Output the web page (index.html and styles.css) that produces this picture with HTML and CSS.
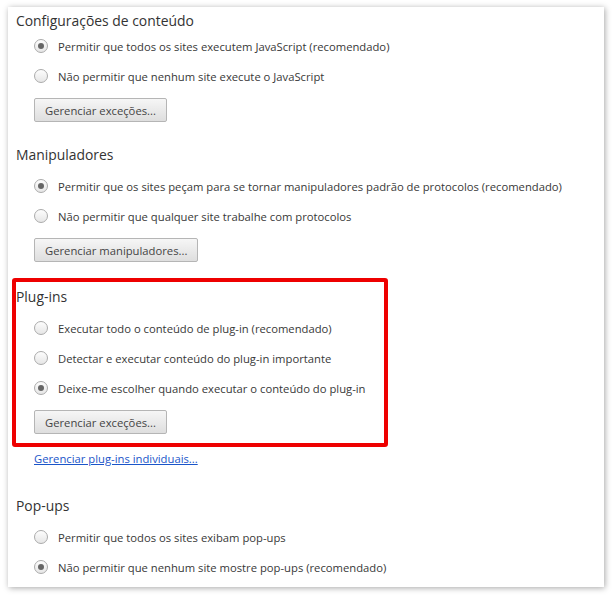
FILE: index.html
```html
<!DOCTYPE html>
<html lang="pt-BR">
<head>
    <meta charset="UTF-8">
    <title>Configurações de conteúdo</title>
    <link rel="stylesheet" href="styles.css">
</head>
<body>

<div class="panel">
    <h1 class="panel-title">Configurações de conteúdo</h1>

    <div class="section section-first">
        <label class="option"><span class="radio checked"></span>Permitir que todos os sites executem JavaScript (recomendado)</label>
        <label class="option"><span class="radio"></span>Não permitir que nenhum site execute o JavaScript</label>
        <button class="btn">Gerenciar exceções...</button>
    </div>

    <div class="section">
        <h2>Manipuladores</h2>
        <label class="option"><span class="radio checked"></span>Permitir que os sites peçam para se tornar manipuladores padrão de protocolos (recomendado)</label>
        <label class="option"><span class="radio"></span>Não permitir que qualquer site trabalhe com protocolos</label>
        <button class="btn">Gerenciar manipuladores...</button>
    </div>

    <div class="section section-highlight">
        <h2>Plug-ins</h2>
        <label class="option"><span class="radio"></span>Executar todo o conteúdo de plug-in (recomendado)</label>
        <label class="option"><span class="radio"></span>Detectar e executar conteúdo do plug-in importante</label>
        <label class="option"><span class="radio checked"></span>Deixe-me escolher quando executar o conteúdo do plug-in</label>
        <button class="btn">Gerenciar exceções...</button>
    </div>
    <a href="#" class="link">Gerenciar plug-ins individuais...</a>

    <div class="section section-popups">
        <h2>Pop-ups</h2>
        <label class="option"><span class="radio"></span>Permitir que todos os sites exibam pop-ups</label>
        <label class="option"><span class="radio checked"></span>Não permitir que nenhum site mostre pop-ups (recomendado)</label>
    </div>
</div>

</body>
</html>
```

FILE: styles.css
```css
body {
    font-family: 'Open Sans', 'Liberation Sans', sans-serif;
    background-color: #fff;
    margin: 0;
    padding: 7px 11px 9px 8px;
    color: #333;
}
.panel {
    background: #fff;
    height: 580px;
    padding: 0 8px;
    box-sizing: border-box;
    box-shadow: 1px 1px 6px rgba(0, 0, 0, 0.35);
    overflow: hidden;
}
.panel-title, h2 {
    font-size: 13.9px;
    font-weight: normal;
    line-height: 20px;
    color: #333;
    margin: 0;
}
.panel-title {
    padding-top: 4px;
}
.section {
    margin-top: 23px;
}
.section-first {
    margin-top: 0;
}
.section h2 {
    margin-bottom: 6px;
}
.section-highlight {
    width: 364px;
    margin: 16px 0 0 -4px;
    padding: 5px 0 9px 4px;
    border: 4px solid #ee0000;
    border-radius: 3px;
}
.section-highlight h2 {
    margin-left: -4px;
}
.section-popups {
    margin-top: 29px;
}
.option {
    display: flex;
    align-items: center;
    height: 30px;
    padding-left: 18px;
    font-size: 11.25px;
    color: #383838;
    white-space: nowrap;
}
.section-highlight .option {
    padding-left: 14px;
}
.radio {
    width: 12px;
    height: 12px;
    border: 1px solid #ababab;
    border-radius: 50%;
    background: linear-gradient(#fdfdfd, #e6e6e6);
    margin-right: 10px;
    display: flex;
    align-items: center;
    justify-content: center;
    flex-shrink: 0;
}
.radio.checked::after {
    content: '';
    width: 6px;
    height: 6px;
    border-radius: 50%;
    background: #666;
}
.btn {
    display: block;
    height: 24px;
    margin: 7px 0 0 18px;
    padding: 0 10px;
    font-family: inherit;
    font-size: 11.25px;
    color: #444;
    background: linear-gradient(#f6f6f6, #dedede);
    border: 1px solid #b5b5b5;
    border-radius: 2px;
}
.section-highlight .btn {
    margin-left: 14px;
}
.link {
    display: block;
    width: max-content;
    margin: 4px 0 0 18px;
    font-size: 11.25px;
    line-height: 16px;
    color: #1a55c9;
}
```
